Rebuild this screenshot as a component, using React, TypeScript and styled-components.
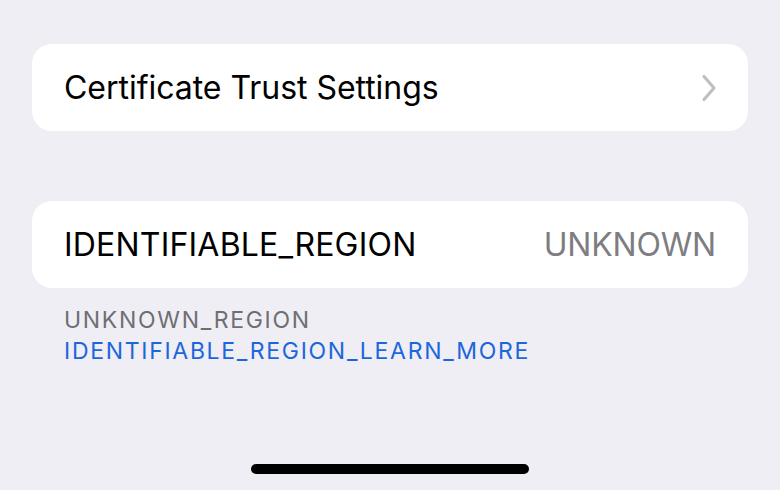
import React, { FC } from "react";
import styled, { createGlobalStyle } from "styled-components";

const GlobalStyle = createGlobalStyle`
  html, body {
    margin: 0;
    padding: 0;
    background: #efeef5;
  }
  * {
    box-sizing: border-box;
  }
`;

const Page = styled.div`
  display: flex;
  flex-direction: column;
  height: 490px;
  padding: 44px 32px 0;
  font-family: Inter, "Liberation Sans", sans-serif;
  background: #efeef5;
  overflow: hidden;
`;

const Card = styled.div<{ $gap?: number }>`
  display: flex;
  align-items: center;
  justify-content: space-between;
  height: 87px;
  padding: 0 32px;
  margin-top: ${({ $gap }) => $gap ?? 0}px;
  background: #ffffff;
  border-radius: 20px;
`;

const Label = styled.span<{ $tracking?: number }>`
  font-size: 32px;
  color: #000000;
  letter-spacing: ${({ $tracking }) => $tracking ?? 0}px;
`;

const Value = styled.span`
  font-size: 32px;
  color: #7d7d82;
  letter-spacing: -0.2px;
`;

const Footer = styled.div`
  display: flex;
  flex-direction: column;
  gap: 8px;
  padding: 21px 32px 0;
`;

const FooterText = styled.span<{ $link?: boolean }>`
  font-size: 23px;
  line-height: 23px;
  letter-spacing: 1.7px;
  color: ${({ $link }) => ($link ? "#1c66dc" : "#6e6e73")};
`;

const HomeBar = styled.div`
  align-self: center;
  width: 278px;
  height: 10px;
  margin-top: auto;
  margin-bottom: 16px;
  border-radius: 5px;
  background: #000000;
`;

const Chevron: FC = () => (
  <svg width="14" height="26" viewBox="0 0 14 26" fill="none">
    <path
      d="M2 1.5 L12 13 L2 24.5"
      stroke="#bdbdc2"
      strokeWidth="3"
      strokeLinecap="round"
      strokeLinejoin="round"
    />
  </svg>
);

const App: FC = () => {
  return (
    <>
      <GlobalStyle />
      <Page>
        <Card>
          <Label $tracking={-0.03}>Certificate Trust Settings</Label>
          <Chevron />
        </Card>
        <Card $gap={70}>
          <Label $tracking={0.2}>IDENTIFIABLE_REGION</Label>
          <Value>UNKNOWN</Value>
        </Card>
        <Footer>
          <FooterText>UNKNOWN_REGION</FooterText>
          <FooterText $link>IDENTIFIABLE_REGION_LEARN_MORE</FooterText>
        </Footer>
        <HomeBar />
      </Page>
    </>
  );
};

export default App;
